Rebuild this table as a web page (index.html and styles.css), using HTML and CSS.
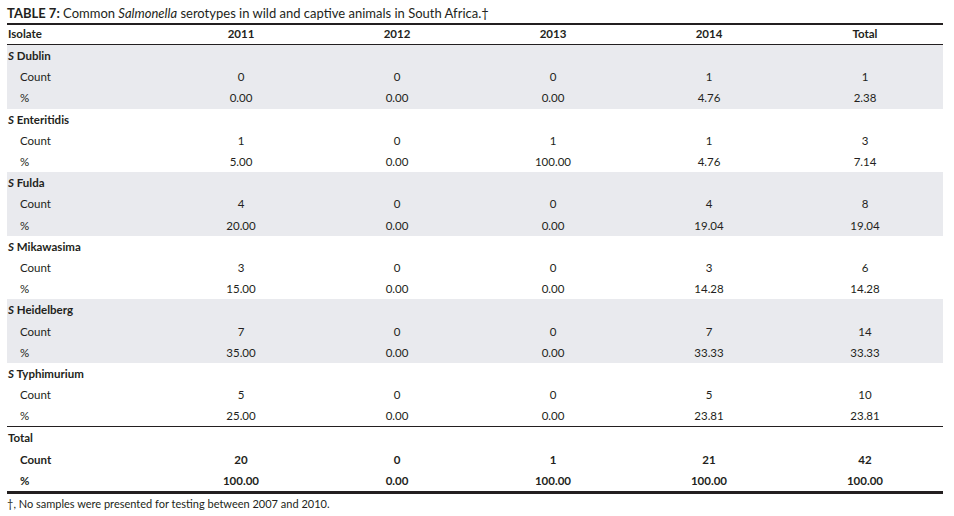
FILE: index.html
```html
<!DOCTYPE html>
<html>
<head>
<meta charset="utf-8">
<link rel="stylesheet" href="styles.css">
</head>
<body>
<div class="wrap">
  <div class="caption"><b>TABLE 7:</b> Common <i>Salmonella</i> serotypes in wild and captive animals in South Africa.†</div>
  <table class="tbl">
    <thead>
      <tr><th class="lbl">Isolate</th><th>2011</th><th>2012</th><th>2013</th><th>2014</th><th>Total</th></tr>
    </thead>
    <tbody class="shade">
      <tr class="grp"><td class="lbl"><i>S</i> Dublin</td><td></td><td></td><td></td><td></td><td></td></tr>
      <tr><td class="sub">Count</td><td>0</td><td>0</td><td>0</td><td>1</td><td>1</td></tr>
      <tr><td class="sub">%</td><td>0.00</td><td>0.00</td><td>0.00</td><td>4.76</td><td>2.38</td></tr>
    </tbody>
    <tbody>
      <tr class="grp"><td class="lbl"><i>S</i> Enteritidis</td><td></td><td></td><td></td><td></td><td></td></tr>
      <tr><td class="sub">Count</td><td>1</td><td>0</td><td>1</td><td>1</td><td>3</td></tr>
      <tr><td class="sub">%</td><td>5.00</td><td>0.00</td><td>100.00</td><td>4.76</td><td>7.14</td></tr>
    </tbody>
    <tbody class="shade">
      <tr class="grp"><td class="lbl"><i>S</i> Fulda</td><td></td><td></td><td></td><td></td><td></td></tr>
      <tr><td class="sub">Count</td><td>4</td><td>0</td><td>0</td><td>4</td><td>8</td></tr>
      <tr><td class="sub">%</td><td>20.00</td><td>0.00</td><td>0.00</td><td>19.04</td><td>19.04</td></tr>
    </tbody>
    <tbody>
      <tr class="grp"><td class="lbl"><i>S</i> Mikawasima</td><td></td><td></td><td></td><td></td><td></td></tr>
      <tr><td class="sub">Count</td><td>3</td><td>0</td><td>0</td><td>3</td><td>6</td></tr>
      <tr><td class="sub">%</td><td>15.00</td><td>0.00</td><td>0.00</td><td>14.28</td><td>14.28</td></tr>
    </tbody>
    <tbody class="shade">
      <tr class="grp"><td class="lbl"><i>S</i> Heidelberg</td><td></td><td></td><td></td><td></td><td></td></tr>
      <tr><td class="sub">Count</td><td>7</td><td>0</td><td>0</td><td>7</td><td>14</td></tr>
      <tr><td class="sub">%</td><td>35.00</td><td>0.00</td><td>0.00</td><td>33.33</td><td>33.33</td></tr>
    </tbody>
    <tbody>
      <tr class="grp"><td class="lbl"><i>S</i> Typhimurium</td><td></td><td></td><td></td><td></td><td></td></tr>
      <tr><td class="sub">Count</td><td>5</td><td>0</td><td>0</td><td>5</td><td>10</td></tr>
      <tr><td class="sub">%</td><td>25.00</td><td>0.00</td><td>0.00</td><td>23.81</td><td>23.81</td></tr>
    </tbody>
    <tbody class="total">
      <tr class="grp"><td class="lbl">Total</td><td></td><td></td><td></td><td></td><td></td></tr>
      <tr><td class="sub">Count</td><td>20</td><td>0</td><td>1</td><td>21</td><td>42</td></tr>
      <tr><td class="sub">%</td><td>100.00</td><td>0.00</td><td>100.00</td><td>100.00</td><td>100.00</td></tr>
    </tbody>
  </table>
  <div class="foot">†, No samples were presented for testing between 2007 and 2010.</div>
</div>
</body>
</html>
```

FILE: styles.css
```css
html, body {
  margin: 0;
  padding: 0;
  background: #ffffff;
}
body {
  font-family: Lato, "Open Sans", sans-serif;
  color: #231f20;
}
.wrap {
  padding: 5px 12px 0 7px;
}
.caption {
  font-size: 13px;
  line-height: 16px;
  height: 18px;
  white-space: nowrap;
}
.caption b {
  font-weight: 700;
}
.tbl {
  width: 935px;
  border-collapse: collapse;
  table-layout: fixed;
  font-size: 11.5px;
  border-top: 2px solid #231f20;
  border-bottom: 3px solid #231f20;
}
.tbl th, .tbl td {
  padding: 0;
  text-align: center;
  white-space: nowrap;
  line-height: 14px;
  vertical-align: middle;
}
.tbl td {
  height: 20.2px;
  padding-top: 1px;
}
.tbl th {
  font-weight: 700;
  height: 17px;
  padding-bottom: 2px;
  border-bottom: 1px solid #231f20;
  width: 156px;
}
.tbl th.lbl {
  width: 155px;
}
.tbl .lbl {
  text-align: left;
  padding-left: 1px;
  font-weight: 700;
}
.tbl .sub {
  text-align: left;
  padding-left: 13px;
}
.shade td {
  background: #e9eaee;
}
.total {
  border-top: 1px solid #231f20;
}
.total td {
  font-weight: 700;
}
.foot {
  font-size: 11px;
  line-height: 14px;
  padding-top: 3px;
  white-space: nowrap;
}
```
